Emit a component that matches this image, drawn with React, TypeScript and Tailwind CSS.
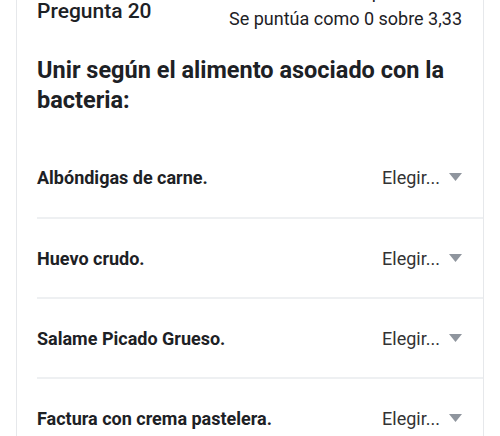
import React from 'react'

const items = [
  'Albóndigas de carne.',
  'Huevo crudo.',
  'Salame Picado Grueso.',
  'Factura con crema pastelera.',
]

const App: React.FC = () => {
  return (
    <div className="h-[436px] overflow-hidden bg-white px-4 text-[#1d2125]" style={{ fontFamily: 'Roboto, sans-serif' }}>
      <div className="-mt-[17px] border-x border-[#e6e8eb] pl-[20px]">
        <div className="flex justify-between pr-[21px]">
          <div className="pt-[16px] text-[21px] font-medium leading-6">Pregunta 20</div>
          <div className="text-right text-[18px] leading-6">
            <div className="h-6 leading-[18px]">Sin responder aún</div>
            <div>Se puntúa como 0 sobre 3,33</div>
          </div>
        </div>
        <h2 className="mt-[24px] pr-[21px] text-[23.5px] font-bold leading-[30px]">
          Unir según el alimento asociado con la bacteria:
        </h2>
        <div className="mt-[22px]">
          {items.map((item, i) => (
            <div
              key={item}
              className={`flex h-[80px] items-center justify-between pr-[21px] ${i > 0 ? 'border-t-2 border-[#eef0f2]' : ''}`}
            >
              <span className="text-[18px] font-bold">{item}</span>
              <span className="flex items-center gap-[9px] text-[18px] text-[#333]">
                Elegir...
                <svg width="13" height="8" viewBox="0 0 13 8">
                  <path d="M0 0h13L6.5 8z" fill="#8f959e" />
                </svg>
              </span>
            </div>
          ))}
        </div>
      </div>
    </div>
  )
}

export default App
